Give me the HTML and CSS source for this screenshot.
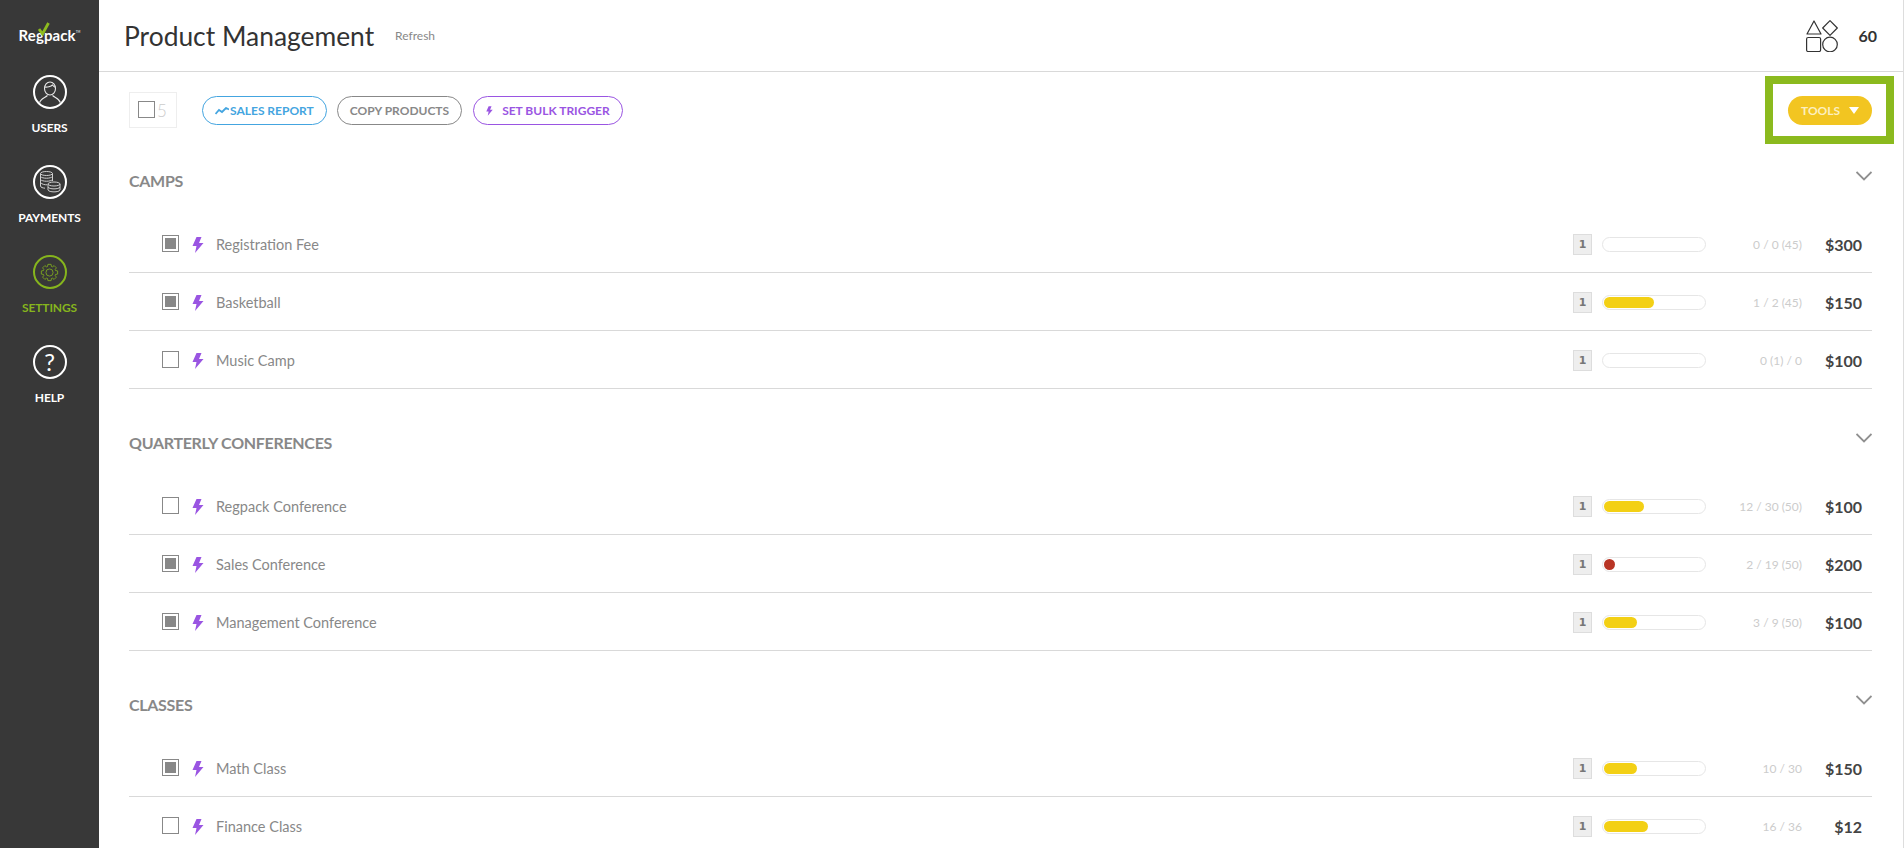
FILE: index.html
```html
<!DOCTYPE html>
<html lang="en">
<head>
  <meta charset="UTF-8">
  <title>Product Management</title>
  <link rel="stylesheet" href="styles.css">
</head>
<body>
  <svg class="defs">
    <symbol id="bolt" viewBox="0 0 12 16"><path d="M4.500 0 L0.500 9 H4.500 L3 16 L11.500 6 H7 L9.500 0 Z"/></symbol>
    <symbol id="chevron" viewBox="0 0 16 10"><path d="M0.500 1 L8 8.500 L15.500 1" fill="none" stroke="#8f8f8f" stroke-width="1.800"/></symbol>
  </svg>
  <div class="app">
    <nav class="sidebar">
      <div class="logo">
        <span class="logo-text">Regpack<sup class="logo-tm">TM</sup></span>
        <svg class="logo-check" width="12" height="14" viewBox="0 0 12 14"><path d="M1 7 L4.500 12 L10.500 1" fill="none" stroke="#8dbb1f" stroke-width="2.800"/></svg>
      </div>
      <a class="nav-item">
        <span class="nav-icon">
          <svg width="24" height="24" viewBox="0 0 24 24" fill="none" stroke="#e8e8e8" stroke-width="1.100"><ellipse cx="12" cy="8.500" rx="5.500" ry="6.500"/><path d="M6.800 7 C9 7.500 13 6.500 14.500 5 C15.500 6.500 16.500 7 17.200 7.200"/><path d="M1.500 23 C2.500 18.500 6.500 18 9.500 15.500 M22.500 23 C21.500 18.500 17.500 18 14.500 15.500"/></svg>
        </span>
        USERS
      </a>
      <a class="nav-item">
        <span class="nav-icon">
          <svg width="22" height="22" viewBox="0 0 22 22" fill="none" stroke="#cfcfcf" stroke-width="1"><ellipse cx="7.500" cy="2.500" rx="6" ry="2"/><path d="M1.500 2.500 V15 C1.500 16.500 4 17 6 17.200 M13.500 2.500 V10 M1.500 5.500 C3 7.800 12 7.800 13.500 5.500 M1.500 8.500 C3 10.800 12 10.800 13.500 8.500 M1.500 11.500 C3 13.500 6 13.800 8 13.800"/><ellipse cx="15" cy="13" rx="6" ry="2"/><path d="M9 13 V19 C10 21.500 20 21.500 21 19 V13 M9 16 C10 18.500 20 18.500 21 16"/></svg>
        </span>
        PAYMENTS
      </a>
      <a class="nav-item nav-active">
        <span class="nav-icon">
          <svg width="19" height="19" viewBox="-12 -12 24 24" fill="none" stroke="#86b51d" stroke-width="1"><path d="M-2.470 -7.600 L-2 -10.300 L2 -10.300 L2.470 -7.600 L3.630 -7.120 L5.870 -8.700 L8.700 -5.870 L7.120 -3.630 L7.600 -2.470 L10.300 -2 L10.300 2 L7.600 2.470 L7.120 3.630 L8.700 5.870 L5.870 8.700 L3.630 7.120 L2.470 7.600 L2 10.300 L-2 10.300 L-2.470 7.600 L-3.630 7.120 L-5.870 8.700 L-8.700 5.870 L-7.120 3.630 L-7.600 2.470 L-10.300 2 L-10.300 -2 L-7.600 -2.470 L-7.120 -3.630 L-8.700 -5.870 L-5.870 -8.700 L-3.630 -7.120 Z"/><circle r="4.500"/></svg>
        </span>
        SETTINGS
      </a>
      <a class="nav-item">
        <span class="nav-icon nav-help">?</span>
        HELP
      </a>
    </nav>

    <main class="main">
      <header class="page-header">
        <h1>Product Management</h1>
        <a class="refresh">Refresh</a>
        <div class="header-count">
          <svg width="32" height="32" viewBox="0 0 32 32" fill="none" stroke="#333" stroke-width="1.200" stroke-linejoin="round"><path d="M8 1 L15 14 H1 Z"/><path d="M24 0.700 L31.300 8 L24 15.300 L16.700 8 Z"/><rect x="0.600" y="17.500" width="14" height="14" rx="1.500"/><circle cx="24" cy="24.500" r="7.300"/></svg>
          <span>60</span>
        </div>
      </header>

      <div class="toolbar">
        <div class="select-all">
          <span class="checkbox"></span>
          <span class="select-num">5</span>
        </div>
        <a class="pill pill-blue">
          <svg width="14" height="8" viewBox="0 0 14 8" fill="none" stroke="#44a5e0" stroke-width="1.800"><path d="M0.500 7 L4 3 L7 5 L11 1 L14 2.500"/></svg>
          SALES REPORT
        </a>
        <a class="pill pill-gray">COPY PRODUCTS</a>
        <a class="pill pill-purple">
          <svg class="bolt-small" width="7" height="10"><use href="#bolt"/></svg>
          SET BULK TRIGGER
        </a>
        <a class="tools-btn">TOOLS <span class="tools-caret"></span></a>
      </div>
      <div class="highlight"></div>

      <section class="group">
        <div class="group-head">
          <h2>CAMPS</h2>
          <svg class="chevron" width="16" height="10"><use href="#chevron"/></svg>
        </div>
        <div class="row">
          <span class="checkbox checked"></span>
          <svg class="bolt" width="12" height="16"><use href="#bolt"/></svg>
          <span class="row-name">Registration Fee</span>
          <span class="qty">1</span>
          <span class="bar"></span>
          <span class="stats">0 / 0 (45)</span>
          <span class="price">$300</span>
        </div>
        <div class="row">
          <span class="checkbox checked"></span>
          <svg class="bolt" width="12" height="16"><use href="#bolt"/></svg>
          <span class="row-name">Basketball</span>
          <span class="qty">1</span>
          <span class="bar"><span class="bar-fill" style="width: 50px"></span></span>
          <span class="stats">1 / 2 (45)</span>
          <span class="price">$150</span>
        </div>
        <div class="row">
          <span class="checkbox"></span>
          <svg class="bolt" width="12" height="16"><use href="#bolt"/></svg>
          <span class="row-name">Music Camp</span>
          <span class="qty">1</span>
          <span class="bar"></span>
          <span class="stats">0 (1) / 0</span>
          <span class="price">$100</span>
        </div>
      </section>

      <section class="group">
        <div class="group-head">
          <h2>QUARTERLY CONFERENCES</h2>
          <svg class="chevron" width="16" height="10"><use href="#chevron"/></svg>
        </div>
        <div class="row">
          <span class="checkbox"></span>
          <svg class="bolt" width="12" height="16"><use href="#bolt"/></svg>
          <span class="row-name">Regpack Conference</span>
          <span class="qty">1</span>
          <span class="bar"><span class="bar-fill" style="width: 40px"></span></span>
          <span class="stats">12 / 30 (50)</span>
          <span class="price">$100</span>
        </div>
        <div class="row">
          <span class="checkbox checked"></span>
          <svg class="bolt" width="12" height="16"><use href="#bolt"/></svg>
          <span class="row-name">Sales Conference</span>
          <span class="qty">1</span>
          <span class="bar"><span class="bar-fill bar-low" style="width: 11px"></span></span>
          <span class="stats">2 / 19 (50)</span>
          <span class="price">$200</span>
        </div>
        <div class="row">
          <span class="checkbox checked"></span>
          <svg class="bolt" width="12" height="16"><use href="#bolt"/></svg>
          <span class="row-name">Management Conference</span>
          <span class="qty">1</span>
          <span class="bar"><span class="bar-fill" style="width: 33px"></span></span>
          <span class="stats">3 / 9 (50)</span>
          <span class="price">$100</span>
        </div>
      </section>

      <section class="group">
        <div class="group-head">
          <h2>CLASSES</h2>
          <svg class="chevron" width="16" height="10"><use href="#chevron"/></svg>
        </div>
        <div class="row">
          <span class="checkbox checked"></span>
          <svg class="bolt" width="12" height="16"><use href="#bolt"/></svg>
          <span class="row-name">Math Class</span>
          <span class="qty">1</span>
          <span class="bar"><span class="bar-fill" style="width: 33px"></span></span>
          <span class="stats">10 / 30</span>
          <span class="price">$150</span>
        </div>
        <div class="row">
          <span class="checkbox"></span>
          <svg class="bolt" width="12" height="16"><use href="#bolt"/></svg>
          <span class="row-name">Finance Class</span>
          <span class="qty">1</span>
          <span class="bar"><span class="bar-fill" style="width: 44px"></span></span>
          <span class="stats">16 / 36</span>
          <span class="price">$12</span>
        </div>
      </section>
    </main>
  </div>
</body>
</html>
```

FILE: styles.css
```css
html, body {
  margin: 0;
  height: 100%;
  overflow: hidden;
}

body {
  font-family: 'Lato', sans-serif;
  background: white;
  color: #333;
}

.defs {
  display: none;
}

.app {
  display: flex;
  height: 848px;
}

.sidebar {
  width: 99px;
  flex-shrink: 0;
  background: #383838;
  padding-top: 21px;
  box-sizing: border-box;
}

.logo {
  position: relative;
  height: 54px;
  text-align: center;
}

.logo-text {
  display: block;
  padding-top: 5px;
  color: white;
  font-size: 15px;
  font-weight: 700;
  letter-spacing: 0.1px;
}

.logo-tm {
  font-size: 3px;
  font-weight: 400;
  vertical-align: 8px;
}

.logo-check {
  position: absolute;
  left: 38px;
  top: 1px;
}

.nav-item {
  display: flex;
  flex-direction: column;
  align-items: center;
  height: 90px;
  color: white;
  font-size: 12px;
  font-weight: 700;
  letter-spacing: -0.1px;
}

.nav-icon {
  display: flex;
  align-items: center;
  justify-content: center;
  box-sizing: border-box;
  width: 34px;
  height: 34px;
  border: 2px solid white;
  border-radius: 50%;
  margin-bottom: 11px;
  overflow: hidden;
}

.nav-active {
  color: #86b51d;
}

.nav-active .nav-icon {
  border-color: #86b51d;
}

.nav-help {
  font-size: 24px;
  font-weight: 400;
  line-height: 1;
}

.main {
  flex: 1;
  min-width: 0;
  position: relative;
  border-right: 1px solid #ddd;
}

.page-header {
  display: flex;
  align-items: center;
  height: 71px;
  padding: 0 26px 0 25px;
  border-bottom: 1px solid #d9d9d9;
}

.page-header h1 {
  margin: 0;
  font-size: 26.4px;
  font-weight: 400;
  color: #333;
}

.refresh {
  margin-left: 21px;
  font-size: 12px;
  color: #888;
}

.header-count {
  display: flex;
  align-items: center;
  gap: 20px;
  margin-left: auto;
  font-size: 16px;
  font-weight: 700;
}

.toolbar {
  display: flex;
  align-items: flex-start;
  box-sizing: border-box;
  height: 55px;
  padding: 20px 31px 0 30px;
}

.select-all {
  display: flex;
  align-items: center;
  gap: 2px;
  box-sizing: border-box;
  width: 48px;
  height: 36px;
  padding-left: 8px;
  margin-right: 25px;
  border: 1px solid #eee;
}

.select-all .checkbox {
  margin-top: -1px;
}

.select-num {
  font-size: 17px;
  font-weight: 300;
  color: #ccc;
}

.checkbox {
  display: block;
  box-sizing: border-box;
  width: 17px;
  height: 17px;
  border: 1px solid #888;
  flex-shrink: 0;
}

.checkbox.checked {
  padding: 2px;
  background: #888;
  background-clip: content-box;
}

.pill {
  display: flex;
  align-items: center;
  box-sizing: border-box;
  height: 29px;
  margin: 4px 10px 0 0;
  border: 1px solid;
  border-radius: 15px;
  font-size: 12px;
  font-weight: 700;
}

.pill-blue {
  gap: 1px;
  padding: 0 12px;
  color: #44a5e0;
  border-color: #44a5e0;
}

.pill-gray {
  margin-right: 11px;
  padding: 0 12px;
  color: #888;
  border-color: #888;
}

.pill-purple {
  gap: 9px;
  padding: 0 12px;
  color: #9a55e2;
  border-color: #9a55e2;
}

.bolt-small {
  fill: #9a55e2;
}

.tools-btn {
  display: flex;
  align-items: center;
  gap: 9px;
  box-sizing: border-box;
  height: 29px;
  width: 84px;
  margin: 4px 0 0 auto;
  padding-left: 13px;
  border-radius: 15px;
  background: #f2c521;
  color: #fcefc0;
  font-size: 12px;
  font-weight: 700;
}

.tools-caret {
  width: 0;
  height: 0;
  border-left: 5px solid transparent;
  border-right: 5px solid transparent;
  border-top: 7px solid white;
}

.highlight {
  position: absolute;
  left: 1666px;
  top: 76px;
  width: 113px;
  height: 52px;
  border: 8px solid #8bba1e;
}

.group {
  padding: 0 31px 0 30px;
}

.group-head {
  position: relative;
  height: 88px;
  box-sizing: border-box;
}

.group-head h2 {
  margin: 0;
  padding-top: 44px;
  font-size: 16px;
  font-weight: 700;
  letter-spacing: -0.3px;
  color: #888;
}

.chevron {
  position: absolute;
  right: 0;
  top: 44px;
}

.row {
  display: flex;
  align-items: center;
  height: 58px;
  box-sizing: border-box;
  padding: 2px 0 0 33px;
  border-bottom: 1px solid #d9d9d9;
}

.row .checkbox {
  margin-top: -2px;
}

.bolt {
  margin-left: 13px;
  fill: #9a55e2;
}

.row-name {
  margin-left: 12px;
  font-size: 14.5px;
  color: #888;
}

.qty {
  display: flex;
  align-items: center;
  justify-content: center;
  box-sizing: border-box;
  width: 19px;
  height: 21px;
  margin-left: auto;
  background: #eee;
  border: 1px solid #ddd;
  font-family: 'DejaVu Sans', sans-serif;
  font-size: 11px;
  font-weight: 700;
  color: #777;
}

.bar {
  display: block;
  box-sizing: border-box;
  width: 104px;
  height: 15px;
  margin-left: 10px;
  padding: 1px;
  border: 1px solid #e6e6e6;
  border-radius: 8px;
}

.bar-fill {
  display: block;
  height: 11px;
  border-radius: 6px;
  background: #f3d015;
}

.bar-low {
  background: #b83424;
}

.stats {
  width: 96px;
  margin-right: 10px;
  text-align: right;
  font-size: 12px;
  color: #ccc;
}

.price {
  width: 60px;
  padding-right: 10px;
  box-sizing: border-box;
  text-align: right;
  font-size: 16px;
  font-weight: 700;
  color: #444;
}
```
